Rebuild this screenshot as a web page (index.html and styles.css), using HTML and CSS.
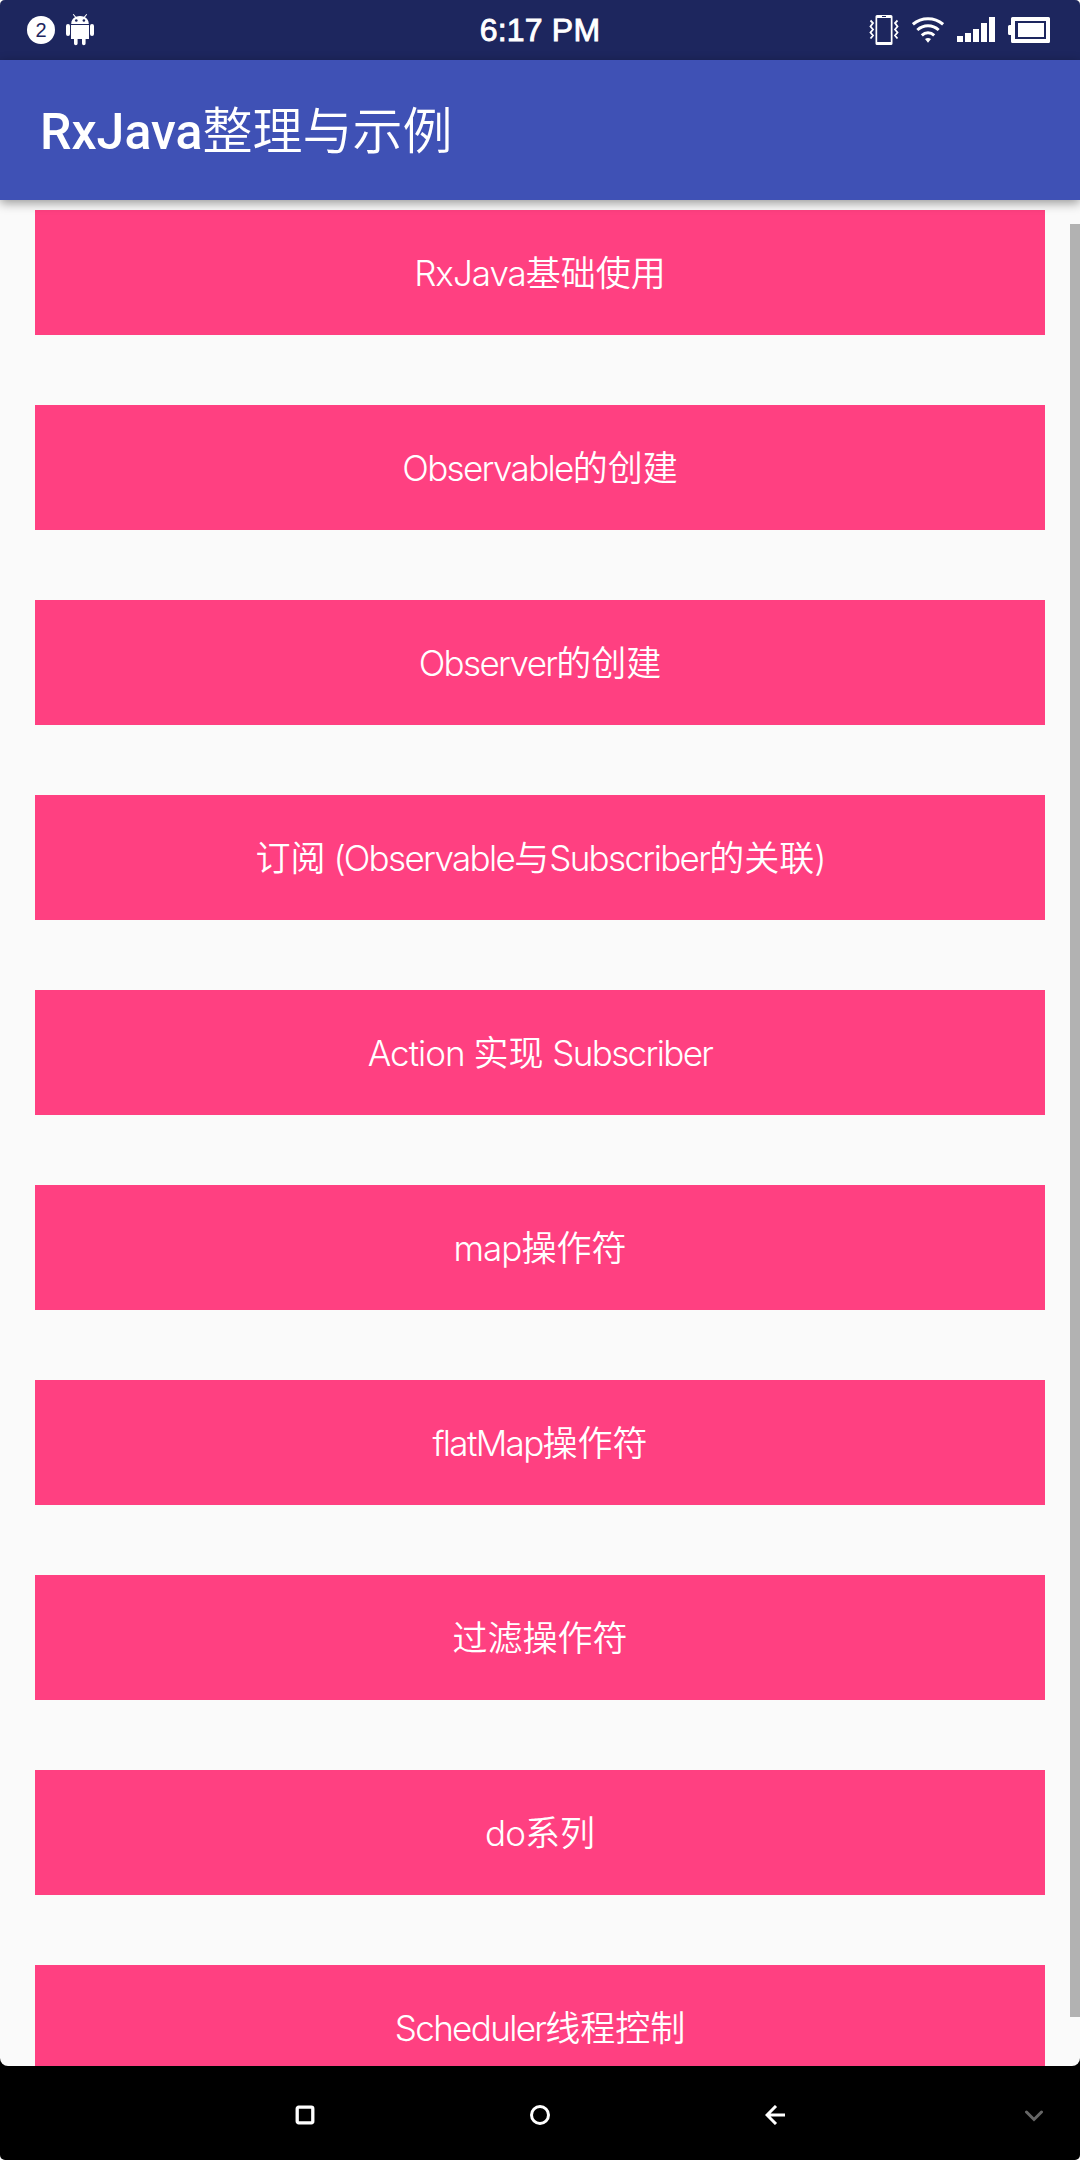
FILE: index.html
```html
<!DOCTYPE html>
<html lang="zh-CN">
<head>
<meta charset="utf-8">
<title>RxJava整理与示例</title>
<link rel="stylesheet" href="styles.css">
</head>
<body>
<div class="screen">
  <div class="app">
    <header class="status">
      <div class="status-side">
        <span class="count">2</span>
        <svg class="android" width="28" height="32" viewBox="0 0 28 32" fill="#fff">
          <path d="M5.200 10C5.200 6.400 7 4.300 9 3.300L6.800.6 7.600 0 10 2.700Q14 1.500 18 2.700L20.400 0 21.200.6 19 3.300C21 4.300 22.800 6.400 22.800 10Z"/>
          <circle cx="10.300" cy="6.500" r="1.300" fill="#1d265e"/><circle cx="17.900" cy="6.500" r="1.300" fill="#1d265e"/>
          <rect x="0" y="10" width="4" height="12" rx="2"/><rect x="24" y="10" width="4" height="12" rx="2"/>
          <path d="M5 11H23V25H19.600V29.500a1.800 1.800 0 0 1-3.600 0V25H11.600V29.500a1.800 1.800 0 0 1-3.600 0V25H5Z"/>
        </svg>
      </div>
      <time class="clock">6:17 PM</time>
      <div class="status-side status-right">
        <svg class="vibrate" width="30" height="31" viewBox="0 0 30 31" fill="none" stroke="#fff">
          <path fill="#fff" stroke="none" fill-rule="evenodd" d="M8 0H22a1.500 1.500 0 0 1 1.500 1.500V28.500a1.500 1.500 0 0 1-1.500 1.500H8a1.500 1.500 0 0 1-1.500-1.500V1.500A1.500 1.500 0 0 1 8 0ZM8.200 3V27H21.800V3ZM13 1V2H17V1Z"/>
          <path stroke-width="1.800" d="M1.500 5.500 4 8 1.500 11.500 4 14.500 1.500 17.500 4 20.500 1.500 23.500M28.500 5.500 26 8 28.500 11.500 26 14.500 28.500 17.500 26 20.500 28.500 23.500"/>
        </svg>
        <svg class="wifi" width="32" height="26" viewBox="0 0 32 26" fill="none" stroke="#fff" stroke-width="3">
          <path d="M.9 7.300Q7.500 1.700 16 1.700T31.100 7.300M5.300 13Q10 8.800 16 8.800T26.700 13M9.800 18.300Q12.500 15.800 16 15.800T22.200 18.300"/>
          <path fill="#fff" stroke="none" d="M13 22Q16 20 19 22L16 25.800Z"/>
        </svg>
        <svg class="signal" width="38" height="25" viewBox="0 0 38 25" fill="#fff">
          <path d="M0 19H6V25H0ZM8 16H14V25H8ZM16 12H22V25H16ZM24 6H30V25H24ZM32 0H38V25H32Z"/>
        </svg>
        <svg class="battery" width="42" height="26" viewBox="0 0 42 26" fill="#fff">
          <path fill-rule="evenodd" d="M4.500 0H40.500Q42 0 42 1.500V24.500Q42 26 40.500 26H4.500Q3 26 3 24.500V18H1.500Q0 18 0 16.500V9.500Q0 8 1.500 8H3V1.500Q3 0 4.500 0ZM7 4V22H38V4Z"/>
          <path d="M10 6H36V20H10Z"/>
        </svg>
      </div>
    </header>
    <h1 class="toolbar"><span class="title-latin">RxJava</span>整理与示例</h1>
    <main class="list">
      <button class="item"><span class="latin">RxJava</span>基础使用</button>
      <button class="item"><span class="latin tight">Observable</span>的创建</button>
      <button class="item"><span class="latin tight">Observer</span>的创建</button>
      <button class="item">订阅<span class="latin paren"> (</span><span class="latin tight">Observable</span>与<span class="latin tight">Subscriber</span>的关联<span class="latin paren">)</span></button>
      <button class="item"><span class="latin">Action </span>实现<span class="latin"> </span><span class="latin tight">Subscriber</span></button>
      <button class="item"><span class="latin">map</span>操作符</button>
      <button class="item"><span class="latin tight">flatMap</span>操作符</button>
      <button class="item">过滤操作符</button>
      <button class="item"><span class="latin">do</span>系列</button>
      <button class="item"><span class="latin tight">Scheduler</span>线程控制</button>
      <div class="scrollbar"></div>
    </main>
  </div>
  <nav class="nav">
    <svg width="20" height="20" viewBox="0 0 20 20" fill="none" stroke="#fff" stroke-width="3.300"><rect x="2.200" y="2.200" width="15.600" height="15.600" rx="1.500"/></svg>
    <svg width="20" height="20" viewBox="0 0 20 20" fill="none" stroke="#fff" stroke-width="3"><circle cx="10" cy="10" r="8.500"/></svg>
    <svg width="20" height="20" viewBox="0 0 20 20" fill="none" stroke="#fff" stroke-width="3"><path d="M11 1 2 10 11 19M2 10H20"/></svg>
    <svg class="hide" width="20" height="12" viewBox="0 0 20 12" fill="none" stroke="#666" stroke-width="3" stroke-linecap="round"><path d="M2.500 2 10 9.500 17.500 2"/></svg>
  </nav>
</div>
</body>
</html>
```
FILE: styles.css
```css
* { box-sizing: border-box; }
body { margin: 0; background: #fff; }
.screen {
  width: 1080px;
  height: 2160px;
  display: flex;
  flex-direction: column;
  background: #000;
  border-radius: 5px;
  overflow: hidden;
  color: #fff;
}
.app {
  height: 2066px;
  display: flex;
  flex-direction: column;
  background: #fafafa;
  border-radius: 0 0 8px 8px;
  overflow: hidden;
}
.status {
  height: 60px;
  flex: none;
  display: grid;
  grid-template-columns: 1fr auto 1fr;
  background: #1d265e;
}
.status-side { display: flex; align-items: flex-start; padding-left: 27px; }
.count {
  width: 28px;
  height: 28px;
  margin-top: 16px;
  border-radius: 50%;
  background: #fff;
  color: #1d265e;
  font: 20px/28px "Liberation Sans", sans-serif;
  text-align: center;
}
.android { margin: 14px 0 0 11px; }
.clock {
  font: 32px/61px "Liberation Sans", sans-serif;
  height: 60px;
  letter-spacing: 0.2px;
  -webkit-text-stroke: 0.9px #fff;
}
.status-right { justify-content: flex-end; padding: 0 30px 0 0; }
.vibrate { margin-top: 15px; }
.wifi { margin: 17px 0 0 13px; }
.signal { margin: 17px 0 0 13px; }
.battery { margin: 17px 0 0 13px; }
.toolbar {
  height: 140px;
  flex: none;
  margin: 0;
  padding-left: 40px;
  background: #3f51b5;
  font: 350 50px/135px "Noto Sans CJK SC", sans-serif;
  box-shadow: 0 3px 10px rgba(0, 0, 0, 0.4);
  position: relative;
  z-index: 1;
}
.title-latin { font-family: Roboto, sans-serif; font-weight: 500; }
.list {
  flex: 1;
  min-height: 0;
  padding: 10px 35px 0;
  display: flex;
  flex-direction: column;
  gap: 70px;
  position: relative;
  overflow: hidden;
}
.item {
  flex: none;
  height: 125px;
  padding: 0 0 4px;
  border: 0;
  background: #ff4081;
  color: #fff;
  font: 350 35px/121px "Noto Sans CJK SC", sans-serif;
  white-space: pre;
}
.latin { font-family: Inter, sans-serif; font-weight: 300; letter-spacing: -1px; }
.tight { letter-spacing: -1.65px; }
.paren { letter-spacing: -2px; }
.scrollbar {
  position: absolute;
  top: 24px;
  right: 0;
  width: 10px;
  height: 1793px;
  background: #b2b2b2;
}
.nav {
  flex: 1;
  display: flex;
  align-items: center;
  gap: 215px;
  padding: 4px 36px 0 295px;
}
.hide { margin: 2px 0 0 auto; }
```
